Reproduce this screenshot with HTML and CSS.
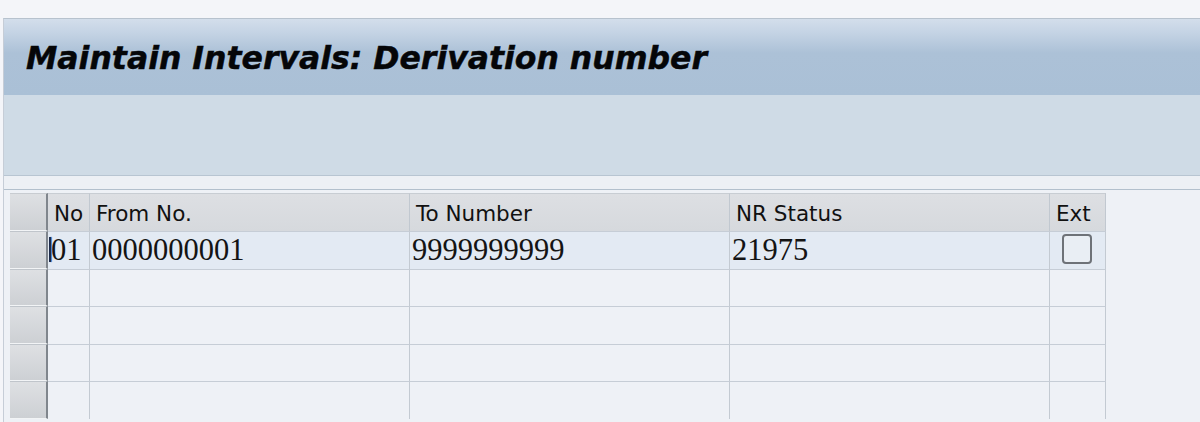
FILE: index.html
```html
<!DOCTYPE html>
<html>
<head>
<meta charset="utf-8">
<link rel="stylesheet" href="styles.css">
</head>
<body>
<div class="top"></div>
<div class="frame">
  <div class="titlebar"><h1 class="title">Maintain Intervals: Derivation number</h1></div>
  <div class="toolbar"></div>
  <div class="gap"></div>
  <div class="area">
    <div class="grid">
      <div class="sel hsel"></div>
      <div class="hc">No</div>
      <div class="hc">From No.</div>
      <div class="hc">To Number</div>
      <div class="hc">NR Status</div>
      <div class="hc">Ext</div>

      <div class="sel"></div>
      <div class="dc act no"><span class="cursor"></span>01</div>
      <div class="dc act">0000000001</div>
      <div class="dc act">9999999999</div>
      <div class="dc act">21975</div>
      <div class="dc act ext"><span class="chk"></span></div>

      <div class="sel"></div><div class="dc"></div><div class="dc"></div><div class="dc"></div><div class="dc"></div><div class="dc"></div>
      <div class="sel"></div><div class="dc"></div><div class="dc"></div><div class="dc"></div><div class="dc"></div><div class="dc"></div>
      <div class="sel"></div><div class="dc"></div><div class="dc"></div><div class="dc"></div><div class="dc"></div><div class="dc"></div>
      <div class="sel"></div><div class="dc"></div><div class="dc"></div><div class="dc"></div><div class="dc"></div><div class="dc"></div>
    </div>
  </div>
</div>
</body>
</html>
```
FILE: styles.css
```css
html, body {
  margin: 0;
  padding: 0;
  background: #f4f5f9;
  overflow: hidden;
  height: 422px;
}
.top {
  height: 18px;
  background: #f4f5f9;
}
.frame {
  margin-left: 3px;
  border-left: 1px solid #c6cdd7;
  border-top: 1px solid #b7c2ce;
  background: #eef1f6;
  height: 410px;
}
.titlebar {
  height: 76px;
  background: linear-gradient(to bottom, #d3deeb 0px, #c4d3e4 14px, #acc1d7 34px, #aac0d6 76px);
  display: flex;
  align-items: center;
}
.title {
  margin: 0 0 0 22px;
  padding-top: 1px;
  font-family: "DejaVu Sans", sans-serif;
  font-weight: bold;
  font-style: oblique;
  font-size: 31.5px;
  color: #050608;
  -webkit-text-stroke: 0.5px #050608;
  text-shadow: 0 0 2px rgba(190, 225, 250, 0.6);
}
.toolbar {
  height: 80px;
  background: #cfdbe6;
  border-bottom: 1px solid #b8c5d2;
}
.gap {
  height: 13px;
  background: #edf0f5;
  border-bottom: 1px solid #b3c0cd;
}
.area {
  padding: 3px 0 0 6px;
  background: #eef1f6;
}
.grid {
  display: grid;
  grid-template-columns: 38px 42px 320px 320px 320px 56px;
  grid-template-rows: 38px repeat(5, 37.5px);
  width: 1096px;
}
.sel {
  background: linear-gradient(to bottom, #dee0e3, #cdd0d4);
  border-right: 2px solid #80868d;
  border-bottom: 1px solid #f2f4f6;
  border-top: 1px solid #c0c5cb;
  box-sizing: border-box;
}
.hsel {
  border-top: 1px solid #c8ccd1;
}
.hc {
  background: linear-gradient(to bottom, #dddfe3, #d6d9dd);
  border-right: 1px solid #c1c8d0;
  border-top: 1px solid #c8cdd3;
  box-sizing: border-box;
  font-family: "DejaVu Sans", sans-serif;
  font-size: 21.5px;
  color: #111;
  display: flex;
  align-items: center;
  padding-left: 6px;
  padding-top: 1px;
}
.dc {
  background: #eef1f6;
  border-right: 1px solid #c3cad2;
  border-top: 1px solid #c6cdd6;
  box-sizing: border-box;
  font-family: "Liberation Serif", serif;
  font-size: 30.5px;
  color: #141414;
  display: flex;
  align-items: center;
  padding-left: 2px;
  position: relative;
}
.dc.act {
  background: #e3eaf3;
}
.no {
  padding-left: 3px;
}
.cursor {
  position: absolute;
  left: 1px;
  top: 5px;
  width: 2px;
  height: 25px;
  background: #1c2a4a;
  box-shadow: 1px 0 1px #3d7fd0;
}
.ext {
  justify-content: flex-start;
  padding-left: 12px;
  padding-bottom: 2px;
}
.chk {
  width: 26px;
  height: 26px;
  border: 2px solid #6e7278;
  border-radius: 4px;
  background: #e9eef4;
  box-sizing: content-box;
}
```
